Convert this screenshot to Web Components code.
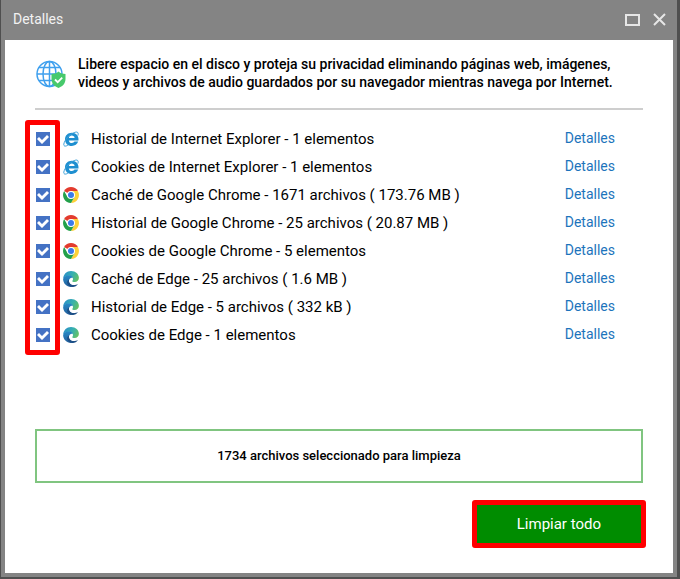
<!DOCTYPE html>
<html lang="es">
<head>
<meta charset="utf-8">
<meta name="viewport" content="width=device-width, initial-scale=1">
<title>Detalles</title>
<style>
    body {
        margin: 0;
        background: #4f4f4f;
        color: #000;
        font-family: Roboto, "Liberation Sans", sans-serif;
        font-size: 15px;
    }
</style>
</head>
<body>
    <cleaner-window heading="Detalles">
        <cleaner-intro>Libere espacio en el disco y proteja su privacidad eliminando páginas web, imágenes, videos y archivos de audio guardados por su navegador mientras navega por Internet.</cleaner-intro>
        <cleaner-list>
            <cleaner-item browser="ie">Historial de Internet Explorer - 1 elementos</cleaner-item>
            <cleaner-item browser="ie">Cookies de Internet Explorer - 1 elementos</cleaner-item>
            <cleaner-item browser="chrome">Caché de Google Chrome - 1671 archivos ( 173.76 MB )</cleaner-item>
            <cleaner-item browser="chrome">Historial de Google Chrome - 25 archivos ( 20.87 MB )</cleaner-item>
            <cleaner-item browser="chrome">Cookies de Google Chrome - 5 elementos</cleaner-item>
            <cleaner-item browser="edge">Caché de Edge - 25 archivos ( 1.6 MB )</cleaner-item>
            <cleaner-item browser="edge">Historial de Edge - 5 archivos ( 332 kB )</cleaner-item>
            <cleaner-item browser="edge">Cookies de Edge - 1 elementos</cleaner-item>
        </cleaner-list>
        <cleaner-summary>1734 archivos seleccionado para limpieza</cleaner-summary>
        <cleaner-action>Limpiar todo</cleaner-action>
    </cleaner-window>

<script>
const BROWSER_ICONS = {
    ie: `
        <svg viewBox="0 0 16 16" aria-hidden="true">
            <path d="M15.500 9.400H5.800c.2 1.700 1.400 2.600 3.100 2.600 1.200 0 2.100-.5 2.600-1.400h3.700c-.9 2.800-3.300 4.400-6.400 4.400-4 0-6.800-2.700-6.800-6.500 0-3.900 2.800-6.700 6.800-6.700 4.200 0 7.100 3 6.700 7.600zM5.900 6.900h5.700C11.400 5.500 10.300 4.600 8.800 4.600S6.200 5.500 5.900 6.900z" fill="#1e8fd0"/>
            <path d="M14.900 4.600C15.800 1.600 14.500.200 11.200 1.600 6.200 3.500 1.400 9.300.8 13.200c-.2 2.300 1.800 2.500 4.600.7" fill="none" stroke="#3a9fd8" stroke-width="1"/>
        </svg>`,
    chrome: `
        <svg viewBox="0 0 16 16" aria-hidden="true">
            <path d="M8 8 1.100 4A8 8 0 0 1 14.900 4z" fill="#e33b2e"/>
            <path d="M8 8V4h6.900A8 8 0 0 1 8 16l3.500-6z" fill="#fdd13a"/>
            <path d="M8 8l3.500 2L8 16A8 8 0 0 1 1.100 4l3.400 6z" fill="#22a04a"/>
            <circle cx="8" cy="8" r="4" fill="#fff"/>
            <circle cx="8" cy="8" r="3" fill="#3b7bea"/>
        </svg>`,
    edge: `
        <svg viewBox="0 0 16 16" aria-hidden="true">
            <defs>
                <linearGradient id="top" x1="0" y1=".3" x2="1" y2=".7">
                    <stop offset="0" stop-color="#2a8fc8"/>
                    <stop offset=".5" stop-color="#36b0b0"/>
                    <stop offset="1" stop-color="#68c35f"/>
                </linearGradient>
                <linearGradient id="side" x1="0" y1="0" x2="0" y2="1">
                    <stop offset="0" stop-color="#2789c6"/>
                    <stop offset="1" stop-color="#235f9c"/>
                </linearGradient>
            </defs>
            <path d="M.2 7.500C.5 3.200 3.700.1 8 .1c4.700 0 7.900 3.200 7.900 6.700 0 2.500-1.700 4.200-4.300 4.200-1.500 0-2.500-.5-2.300-1.100.2-.5.700-.9.700-2C10 6 8.200 4.700 5.900 4.700 3.200 4.700 1.100 5.800.2 7.500z" fill="url(#top)"/>
            <path d="M.1 8C.8 5.500 3 4.300 5.900 4.300c2.100 0 3.600 1 4 2.600C7.800 6.200 5.900 7.900 5.900 9.900c0 2.500 2.500 4.100 5.300 5.300C10.200 15.700 9.100 15.900 8 15.900 3.600 15.900.1 12.400.1 8z" fill="url(#side)"/>
            <path d="M6.100 8.500c-.9 3.300 1.500 5.600 4.800 5.600 1.600 0 2.700-.3 4.100-1.100-1.200 1.900-3.100 3-5.400 3-3.300 0-5.500-2.300-5.500-4.700 0-1.200.8-2.300 2-2.800z" fill="#1d4f86"/>
        </svg>`
};

class CleanerWindow extends HTMLElement {
    connectedCallback() {
        this.attachShadow({ mode: 'open' });
        this.shadowRoot.innerHTML = `
            <style>
                :host {
                    display: flex;
                    flex-direction: column;
                    box-sizing: border-box;
                    min-height: 100vh;
                    border: solid #4f4f4f;
                    border-width: 0 3px 2px 1px;
                    padding: 0 4px 4px;
                    background: #848484;
                }

                header {
                    display: flex;
                    align-items: center;
                    justify-content: space-between;
                    height: 40px;
                    padding: 0 6px 0 8px;
                    box-sizing: border-box;
                    color: #f2f2f2;
                }

                h1 {
                    margin: 0;
                    padding-bottom: 2px;
                    font-size: 14px;
                    font-weight: 400;
                    line-height: 20px;
                }

                .controls {
                    display: flex;
                    gap: 11px;
                }

                button {
                    display: flex;
                    padding: 0;
                    border: 0;
                    background: none;
                    color: #e6e6e6;
                    cursor: pointer;
                }

                svg {
                    width: 16px;
                    height: 16px;
                    fill: none;
                    stroke: currentColor;
                    stroke-width: 2;
                }

                main {
                    display: flex;
                    flex: 1;
                    flex-direction: column;
                    padding: 15px 30px 25px;
                    background: #fff;
                }
            </style>
            <header>
                <h1></h1>
                <div class="controls">
                    <button type="button" aria-label="Maximizar">
                        <svg viewBox="0 0 16 16"><path d="M2 3h13v10H2z"/></svg>
                    </button>
                    <button type="button" aria-label="Cerrar">
                        <svg viewBox="0 0 16 16"><path d="M3 2l11 11M14 2L3 13"/></svg>
                    </button>
                </div>
            </header>
            <main><slot></slot></main>
        `;
        this.shadowRoot.querySelector('h1').textContent = this.getAttribute('heading');
    }
}

class CleanerIntro extends HTMLElement {
    connectedCallback() {
        this.attachShadow({ mode: 'open' });
        this.shadowRoot.innerHTML = `
            <style>
                :host {
                    display: flex;
                    align-items: center;
                    gap: 12px;
                    padding-bottom: 17px;
                    border-bottom: 2px solid #cecece;
                }

                svg {
                    flex: none;
                    width: 31px;
                    height: 30px;
                }

                p {
                    margin: 0;
                    font-size: 14px;
                    font-weight: 500;
                    line-height: 18px;
                }
            </style>
            <svg viewBox="0 0 31 30" aria-hidden="true">
                <g fill="none" stroke="#3fa0ee" stroke-width="1.500">
                    <circle cx="14.500" cy="16" r="12.500"/>
                    <ellipse cx="14.500" cy="16" rx="6.500" ry="12.500"/>
                    <path d="M14.500 3.500v25M2 16h25M4 9.500h21M4 22.500h21"/>
                </g>
                <path d="M23.500 13.500c2 1.800 4.500 2.500 7 2.500v5c0 4.500-3 7.500-7 9-4-1.500-7-4.500-7-9v-5c2.500 0 5-.7 7-2.500z" fill="#47c96c"/>
                <path d="M20 21.500l2.700 2.700 4.500-4.500" fill="none" stroke="#fff" stroke-width="1.800"/>
            </svg>
            <p><slot></slot></p>
        `;
    }
}

class CleanerList extends HTMLElement {
    connectedCallback() {
        this.attachShadow({ mode: 'open' });
        this.shadowRoot.innerHTML = `
            <style>
                :host {
                    display: block;
                    position: relative;
                    margin: 15px 0 24px;
                }

                /* highlight over the column of tick boxes */
                .highlight {
                    position: absolute;
                    inset: -5px auto -6px -10px;
                    width: 25px;
                    border: 5px solid #f00;
                    border-radius: 3px;
                    pointer-events: none;
                }
            </style>
            <slot></slot>
            <div class="highlight"></div>
        `;
    }
}

class CleanerItem extends HTMLElement {
    connectedCallback() {
        this.attachShadow({ mode: 'open' });
        this.shadowRoot.innerHTML = `
            <style>
                :host {
                    display: flex;
                    align-items: center;
                    justify-content: space-between;
                    height: 28px;
                    padding: 0 28px 0 1px;
                }

                label {
                    display: flex;
                    align-items: center;
                    line-height: 20px;
                }

                input {
                    appearance: none;
                    display: grid;
                    flex: none;
                    width: 14px;
                    height: 14px;
                    margin: 0 13px 0 0;
                    border: 1px solid #4472c4;
                    box-sizing: border-box;
                }

                input:checked {
                    background: #4472c4;
                }

                input:checked::before {
                    content: "";
                    width: 12px;
                    height: 12px;
                    background: #fff;
                    clip-path: polygon(0 6px, 2px 4px, 5px 7px, 10px 2px, 12px 4px, 5px 11px);
                }

                svg {
                    display: block;
                    width: 16px;
                    height: 16px;
                    margin-right: 12px;
                }

                a {
                    padding-bottom: 2px;
                    font-size: 14px;
                    line-height: 20px;
                    color: #1c74bc;
                    text-decoration: none;
                }
            </style>
            <label>
                <input type="checkbox" checked>
                ${BROWSER_ICONS[this.getAttribute('browser')]}
                <span><slot></slot></span>
            </label>
            <a href="#">Detalles</a>
        `;
    }
}

class CleanerSummary extends HTMLElement {
    connectedCallback() {
        this.attachShadow({ mode: 'open' });
        this.shadowRoot.innerHTML = `
            <style>
                :host {
                    display: block;
                    margin-top: auto;
                    padding: 15px;
                    border: 2px solid #80c580;
                    font-size: 13px;
                    font-weight: 500;
                    line-height: 20px;
                    text-align: center;
                }
            </style>
            <slot></slot>
        `;
    }
}

class CleanerAction extends HTMLElement {
    connectedCallback() {
        this.attachShadow({ mode: 'open' });
        this.shadowRoot.innerHTML = `
            <style>
                :host {
                    display: flex;
                    justify-content: flex-end;
                    margin: 17px -3px 0 0;
                }

                button {
                    padding: 9px 40px;
                    border: 5px solid #f00;
                    border-radius: 3px;
                    background: #008c00;
                    color: #fff;
                    font: inherit;
                    line-height: 20px;
                    cursor: pointer;
                }
            </style>
            <button type="button"><slot></slot></button>
        `;
    }
}

customElements.define('cleaner-window', CleanerWindow);
customElements.define('cleaner-intro', CleanerIntro);
customElements.define('cleaner-list', CleanerList);
customElements.define('cleaner-item', CleanerItem);
customElements.define('cleaner-summary', CleanerSummary);
customElements.define('cleaner-action', CleanerAction);
</script>
</body>
</html>
